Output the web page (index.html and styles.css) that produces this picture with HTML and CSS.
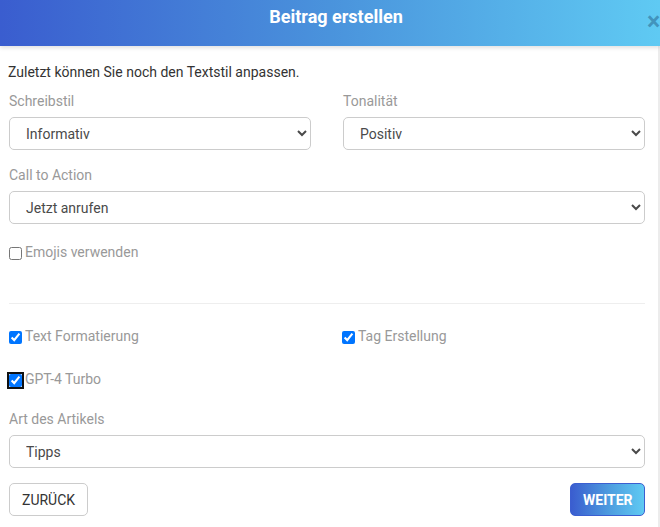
FILE: index.html
```html
<!DOCTYPE html>
<html lang="de">
<head>
<meta charset="utf-8">
<title>Beitrag erstellen</title>
<link rel="stylesheet" href="styles.css">
</head>
<body>
<div class="modal">
  <div class="modal-header">
    <h1 class="modal-title">Beitrag erstellen</h1>
    <span class="close">&times;</span>
  </div>
  <div class="modal-body">
    <p class="intro">Zuletzt können Sie noch den Textstil anpassen.</p>
    <div class="row">
      <div class="group">
        <label class="label">Schreibstil</label>
        <select class="select"><option>Informativ</option></select>
      </div>
      <div class="group">
        <label class="label">Tonalität</label>
        <select class="select"><option>Positiv</option></select>
      </div>
    </div>
    <div class="group">
      <label class="label">Call to Action</label>
      <select class="select"><option>Jetzt anrufen</option></select>
    </div>
    <label class="check check-emoji"><input type="checkbox"><span>Emojis verwenden</span></label>
    <hr class="divider">
    <div class="row check-row">
      <label class="check"><input type="checkbox" checked><span>Text Formatierung</span></label>
      <label class="check"><input type="checkbox" checked><span>Tag Erstellung</span></label>
    </div>
    <label class="check check-gpt"><input type="checkbox" class="focused" checked><span>GPT-4 Turbo</span></label>
    <div class="group">
      <label class="label">Art des Artikels</label>
      <select class="select"><option>Tipps</option></select>
    </div>
    <div class="footer">
      <button class="btn btn-back">ZURÜCK</button>
      <button class="btn btn-next">WEITER</button>
    </div>
  </div>
</div>
</body>
</html>
```
FILE: styles.css
```css
html, body {
  margin: 0;
  padding: 0;
  background: #fff;
}
body {
  font-family: Roboto, "Liberation Sans", Arial, sans-serif;
  font-size: 14px;
  line-height: 21px;
  color: #333;
  width: 660px;
  height: 527px;
  overflow: hidden;
}
.modal {
  width: 660px;
  height: 527px;
  position: relative;
  overflow: hidden;
}
.modal-header {
  height: 46px;
  background: linear-gradient(90deg, #3a5dcf 0%, #4a93dc 50%, #5fcaf3 100%);
  position: relative;
  z-index: 1;
  box-shadow: 0 2px 4px rgba(0, 0, 0, 0.12);
  text-align: center;
}
.modal-title {
  margin: 0;
  padding: 6px 0 0 12px;
  font-size: 18px;
  line-height: 22px;
  font-weight: 700;
  color: #fff;
}
.close {
  position: absolute;
  left: 647px;
  top: 9px;
  font-size: 25px;
  line-height: 26px;
  font-weight: 700;
  color: rgba(20, 60, 100, 0.38);
}
.modal-body {
  height: 481px;
  box-sizing: border-box;
  padding: 16px 13px 0 9px;
  border-right: 2px solid #ececec;
}
.intro {
  margin: 0 0 8px -1px;
}
.row {
  display: grid;
  grid-template-columns: 1fr 1fr;
  column-gap: 32px;
}
.group {
  display: flex;
  flex-direction: column;
  margin-bottom: 15px;
}
.label {
  color: #999;
  margin-bottom: 5px;
}
.select {
  height: 33px;
  box-sizing: border-box;
  border: 1px solid #ccc;
  border-radius: 5px;
  padding: 0 8px 0 12px;
  font-family: Roboto, "Liberation Sans", Arial, sans-serif;
  font-size: 14px;
  color: #4a4a4a;
  background-color: #fff;
  width: 100%;
  margin: 0;
}
.check {
  display: flex;
  align-items: center;
  color: #999;
  height: 21px;
}
.check input {
  margin: 1px 3px 0 0;
  width: 13px;
  height: 13px;
}
.check-emoji {
  margin-top: 18px;
}
.divider {
  border: 0;
  border-top: 1px solid #eee;
  margin: 40px 0 22px 0;
}
.check-row {
  margin-bottom: 22px;
}
.check-row .check:last-child {
  margin-left: -1px;
}
.check-gpt {
  margin-bottom: 19px;
}
.focused {
  outline: 2px solid #111;
  outline-offset: 0;
  border-radius: 2px;
}
.footer {
  display: flex;
  justify-content: space-between;
  margin-top: 3px;
}
.btn {
  height: 33px;
  box-sizing: border-box;
  border-radius: 5px;
  font-family: Roboto, "Liberation Sans", Arial, sans-serif;
  font-size: 14px;
  padding: 0 12px;
  margin: 0;
}
.btn-back {
  width: 79px;
  background: #fff;
  border: 1px solid #ccc;
  color: #333;
}
.btn-next {
  width: 75px;
  background: linear-gradient(90deg, #3a5dcf 0%, #4e9fe0 55%, #5fcaf3 100%);
  border: 1px solid #3b5fd0;
  color: #fff;
  font-weight: 700;
}
```
